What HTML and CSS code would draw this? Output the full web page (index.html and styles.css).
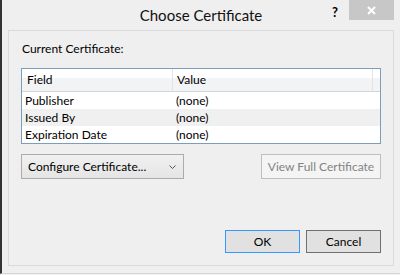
FILE: index.html
```html
<html lang="en">
<head>
    <meta charset="UTF-8">
    <title>Choose Certificate</title>
    <link rel="stylesheet" href="styles.css">
</head>
<body>
<div class="window">
  <div class="titlebar">
    <div></div>
    <div class="title">Choose Certificate</div>
    <div class="caption">
      <span class="help">?</span>
      <span class="close">
        <svg width="9" height="9" viewBox="0 0 9 9"><path d="M1 1L8 8M8 1L1 8" stroke="#fff" stroke-width="2"/></svg>
      </span>
    </div>
  </div>
  <div class="panel">
    <div class="label">Current Certificate:</div>
    <div class="list">
      <div class="list-head">
        <span>Field</span><span>Value</span><span></span>
      </div>
      <div class="list-row"><span>Publisher</span><span>(none)</span></div>
      <div class="list-row alt"><span>Issued By</span><span>(none)</span></div>
      <div class="list-row"><span>Expiration Date</span><span>(none)</span></div>
    </div>
    <div class="actions">
      <button class="btn dropdown">Configure Certificate...
        <svg width="7" height="4" viewBox="0 0 7 4"><path d="M0.5 0.5L3.5 3.5L6.5 0.5" fill="none" stroke="#555" stroke-width="1"/></svg>
      </button>
      <button class="btn disabled">View Full Certificate</button>
    </div>
    <div class="footer">
      <button class="btn default">OK</button>
      <button class="btn cancel">Cancel</button>
    </div>
  </div>
</div>
</body>
</html>
```

FILE: styles.css
```css
body{
  margin:0;
  width:400px;
  height:275px;
  overflow:hidden;
  background-color:#f0f0f0;
  font-family:Lato, "Noto Sans", sans-serif;
  font-size:12px;
  color:#000;
}
.window{
  height:274px;
  box-sizing:border-box;
  border-left:2px solid #333;
  border-bottom:1px solid #d6d6d6;
  background-color:#efefef;
  display:flex;
  flex-direction:column;
}
.titlebar{
  height:30px;
  display:grid;
  grid-template-columns:1fr auto 1fr;
}
.title{
  font-size:15px;
  line-height:30px;
  color:#111;
}
.caption{
  display:flex;
  justify-content:flex-end;
  align-items:flex-start;
  padding-right:6px;
}
.help{
  font-weight:bold;
  font-size:13px;
  line-height:20px;
  margin-right:11px;
  margin-top:2px;
}
.close{
  width:45px;
  height:20px;
  background-color:#c7c7c7;
  display:flex;
  align-items:center;
  justify-content:center;
}
.panel{
  flex:1;
  margin:0 6px 7px 6px;
  border:1px solid #dadada;
  padding:0 12px 12px 12px;
  display:flex;
  flex-direction:column;
}
.label{
  margin-top:10px;
  margin-left:1px;
  line-height:16px;
}
.list{
  margin-top:11px;
  border:1px solid #7f9db9;
  background-color:#fff;
}
.list-head{
  display:grid;
  grid-template-columns:151px 200px 1fr;
  height:22px;
  line-height:22px;
  border-bottom:1px solid #d5d5d5;
  background:linear-gradient(#fff 0, #fff 40%, #f2f3f5 41%, #f2f3f5 100%);
}
.list-head span{
  border-right:1px solid #e3e5e8;
  padding-left:4px;
}
.list-head span:first-child{
  padding-left:5px;
}
.list-head span:last-child{
  border-right:none;
}
.list-row{
  display:grid;
  grid-template-columns:151px 1fr;
  height:17px;
  line-height:17px;
}
.list-row span{
  padding-left:3px;
}
.list-row.alt{
  background-color:#f0f0f0;
}
.actions{
  margin-top:10px;
  display:flex;
  justify-content:space-between;
}
.btn{
  font-family:Lato, "Noto Sans", sans-serif;
  font-size:12px;
  color:#000;
  height:25px;
  border:1px solid #acacac;
  background:linear-gradient(#f0f0f0, #e5e5e5);
  padding:0;
  margin:0;
}
.dropdown{
  width:163px;
  display:flex;
  align-items:center;
  justify-content:space-between;
  padding:0 7px 0 6px;
}
.disabled{
  width:120px;
  color:#838383;
  border-color:#bfbfbf;
  background:#f4f4f4;
}
.footer{
  margin-top:auto;
  display:flex;
  justify-content:flex-end;
  gap:6px;
}
.default,.cancel{
  width:75px;
  height:23px;
  background:#e1e1e1;
}
.default{
  border-color:#3399ff;
}
.cancel{
  border:1px solid #707070;
}
```
